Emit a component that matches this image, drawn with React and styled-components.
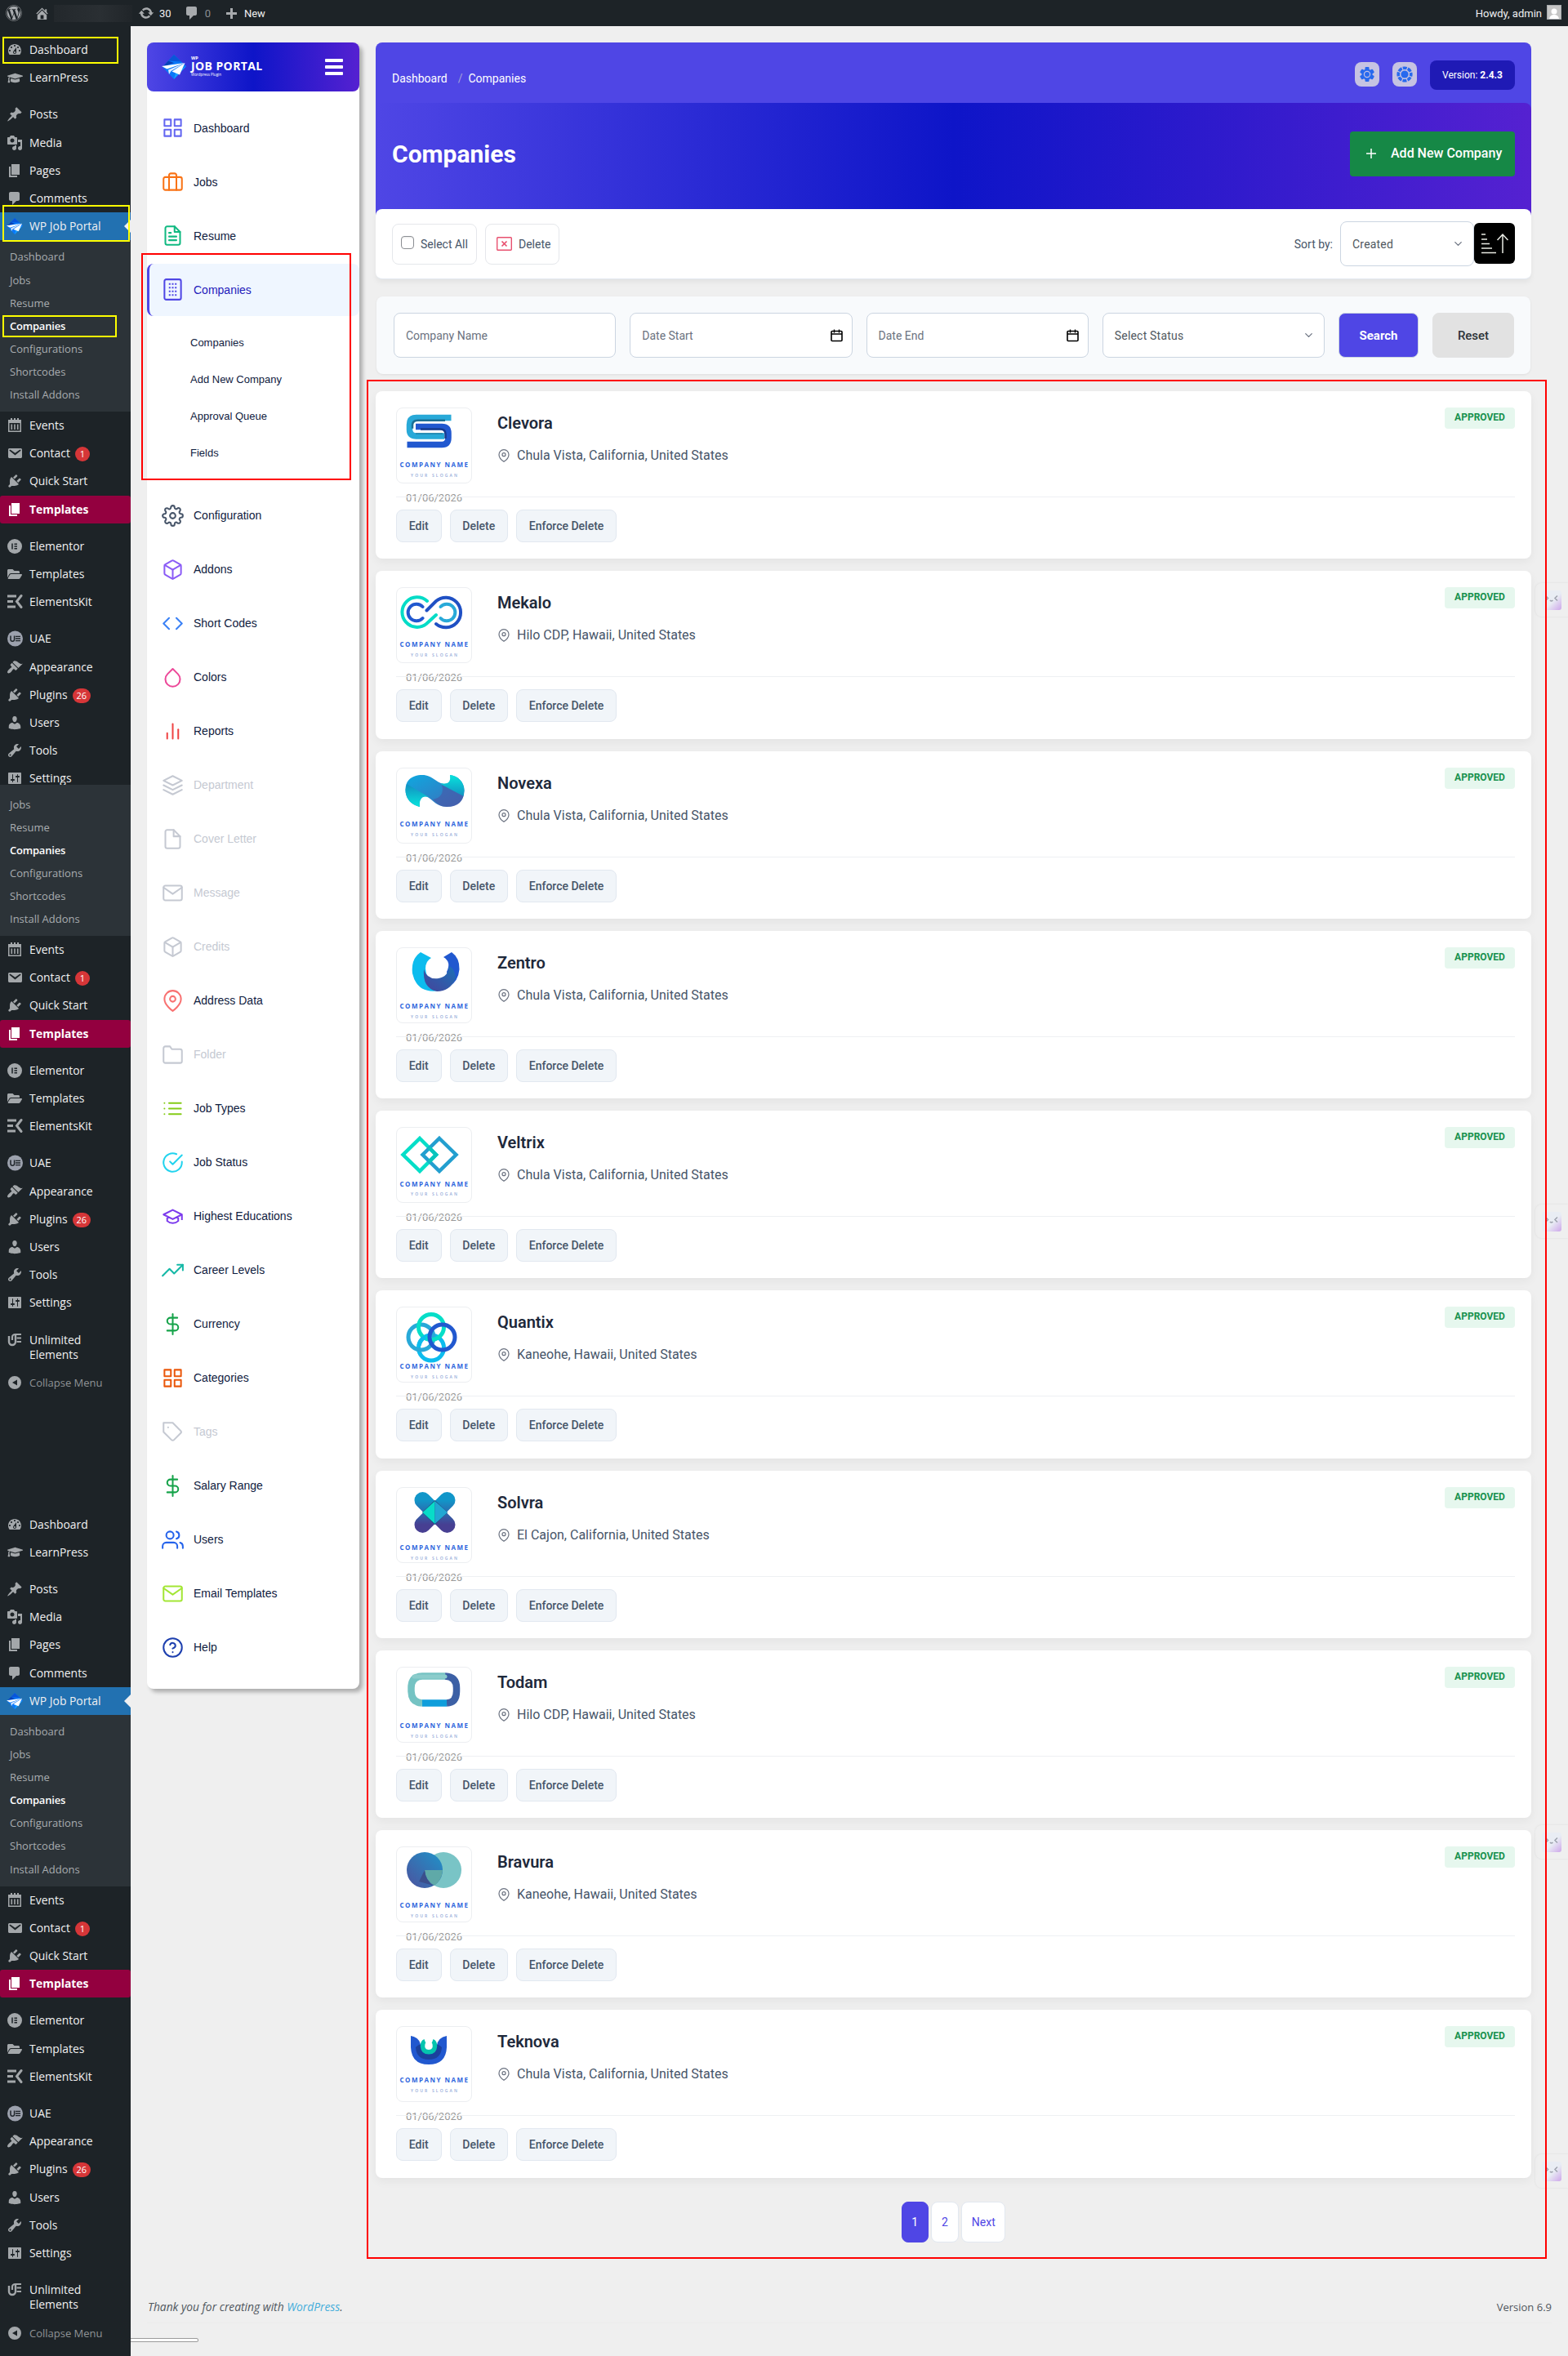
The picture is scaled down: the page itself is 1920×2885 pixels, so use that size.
import React from 'react';
import styled, { createGlobalStyle, css } from 'styled-components';
import {
  FiGrid,
  FiBriefcase,
  FiFileText,
  FiSettings,
  FiBox,
  FiCode,
  FiDroplet,
  FiBarChart2,
  FiLayers,
  FiFile,
  FiMail,
  FiMapPin,
  FiFolder,
  FiList,
  FiCheckCircle,
  FiTrendingUp,
  FiDollarSign,
  FiTag,
  FiUsers,
  FiHelpCircle,
  FiChevronDown,
} from 'react-icons/fi';
import { FaWordpress, FaGraduationCap, FaFolderOpen } from 'react-icons/fa';

const dashicons = {
  home: 'M16 8.5l1.53 1.53-1.06 1.06L10 4.6l-6.47 6.49-1.06-1.06L10 2.5l4 4v-2h2v4zm-6-2.46l6 5.99V18H4v-5.97zM12 17v-5H8v5h4z',
  update:
    'M10.2 3.28c3.53 0 6.43 2.61 6.92 6h2.08l-3.5 4-3.5-4h2.32c-.45-1.97-2.21-3.45-4.32-3.45-1.45 0-2.73.71-3.54 1.78L4.95 5.66C6.23 4.2 8.11 3.28 10.2 3.28zm-.4 13.44c-3.52 0-6.43-2.61-6.92-6H.8l3.5-4c1.17 1.33 2.33 2.67 3.5 4H5.48c.45 1.97 2.21 3.45 4.32 3.45 1.45 0 2.73-.71 3.54-1.78l1.71 1.95c-1.28 1.46-3.15 2.38-5.25 2.38z',
  plus: 'M17 9v3h-5v5H9v-5H4V9h5V4h3v5h5z',
  dashboard:
    'M3.76 16h12.48c1.1-1.37 1.76-3.11 1.76-5 0-4.42-3.58-8-8-8s-8 3.58-8 8c0 1.89.66 3.63 1.76 5zM10 4c.55 0 1 .45 1 1s-.45 1-1 1-1-.45-1-1 .45-1 1-1zM6 6c.55 0 1 .45 1 1s-.45 1-1 1-1-.45-1-1 .45-1 1-1zm8 0c.55 0 1 .45 1 1s-.45 1-1 1-1-.45-1-1 .45-1 1-1zm-5.37 5.55L12 7v6c0 1.1-.9 2-2 2s-2-.9-2-2c0-.57.24-1.08.63-1.45zM4 10c.55 0 1 .45 1 1s-.45 1-1 1-1-.45-1-1 .45-1 1-1zm12 0c.55 0 1 .45 1 1s-.45 1-1 1-1-.45-1-1 .45-1 1-1zm-5 3c0-.55-.45-1-1-1s-1 .45-1 1 .45 1 1 1 1-.45 1-1z',
  post: 'M10.44 3.02l1.82-1.82 6.36 6.35-1.83 1.82c-1.05-.68-2.48-.57-3.41.36l-.75.75c-.92.93-1.04 2.35-.35 3.41l-1.83 1.82-2.41-2.41-2.8 2.79c-.42.42-3.38 2.71-3.8 2.29s1.86-3.39 2.28-3.81l2.79-2.79L4.1 9.36l1.83-1.82c1.05.69 2.48.57 3.4-.36l.75-.75c.93-.92 1.05-2.35.36-3.41z',
  media:
    'M13 11V4c0-.55-.45-1-1-1h-1.67L9 1H5L3.67 3H2c-.55 0-1 .45-1 1v7c0 .55.45 1 1 1h10c.55 0 1-.45 1-1zM7 4.5c1.38 0 2.5 1.12 2.5 2.5S8.38 9.5 7 9.5 4.5 8.38 4.5 7 5.62 4.5 7 4.5zM14 6h5v10.5c0 1.38-1.12 2.5-2.5 2.5S14 17.88 14 16.5s1.12-2.5 2.5-2.5c.17 0 .34.02.5.05V9h-3V6zm-4 8.05V13h2v3.5c0 1.38-1.12 2.5-2.5 2.5S7 17.88 7 16.5 8.12 14 9.5 14c.17 0 .34.02.5.05z',
  page: 'M6 15V2h10v13H6zm-1 1h8v2H3V5h2v11z',
  comment:
    'M5 2h9c1.1 0 2 .9 2 2v7c0 1.1-.9 2-2 2h-2l-5 5v-5H5c-1.1 0-2-.9-2-2V4c0-1.1.9-2 2-2z',
  calendar:
    'M5 1h2v2h2V1h2v2h2V1h2v2h3v15H2V3h3zM3.500 7v9.500h13V7zM5.500 8.500h1.600v6.500h-1.600zM9.200 8.500h1.600v6.500h-1.600zM12.900 8.500h1.600v6.500h-1.600z',
  email:
    'M3.87 4h13.25C18.37 4 19 4.59 19 5.79v8.42c0 1.19-.63 1.79-1.88 1.79H3.87c-1.25 0-1.88-.6-1.88-1.79V5.79c0-1.2.63-1.79 1.88-1.79zm6.62 8.6l6.74-5.53c.24-.2.43-.66.13-1.07-.29-.41-.82-.42-1.17-.17l-5.7 3.86L4.8 5.83c-.35-.25-.88-.24-1.17.17-.3.41-.11.87.13 1.07z',
  plugin:
    'M13.11 4.36L9.87 7.6 8 5.73l3.24-3.24c.35-.34 1.05-.2 1.56.32.52.51.66 1.21.31 1.55zm-8 1.77l.91-1.12 9.01 9.01-1.19.84c-.71.71-2.63 1.16-3.82 1.16H6.14L4.9 17.26c-.59.59-1.54.59-2.12 0-.59-.58-.59-1.53 0-2.12l1.24-1.24v-3.88c0-1.13.4-3.19 1.09-3.89zm7.26 3.97l3.24-3.24c.34-.35 1.04-.21 1.55.31.52.51.66 1.21.31 1.55l-3.24 3.25z',
  appearance:
    'M14.48 11.06L7.41 3.99l1.5-1.5c.5-.56 2.3-.47 3.51.32 1.21.8 1.43 1.28 2.91 2.1 1.18.64 2.45 1.26 4.45.85zm-.71.71L6.7 4.7 4.93 6.47c-.39.39-.39 1.02 0 1.41l1.06 1.06c.39.39.39 1.03 0 1.42-.6.6-1.43 1.11-2.21 1.69-.35.26-.7.53-1.01.84C1.43 14.23.4 16.08 1.4 17.07c.99 1 2.84-.03 4.18-1.36.31-.31.58-.66.85-1.02.57-.78 1.08-1.61 1.69-2.21.39-.39 1.02-.39 1.41 0l1.06 1.06c.39.39 1.02.39 1.41 0z',
  users:
    'M10 9.25c-2.27 0-2.73-3.44-2.73-3.44C7 4.02 7.82 2 9.97 2c2.16 0 2.98 2.02 2.71 3.81 0 0-.41 3.44-2.68 3.44zm0 2.57L12.72 10c2.39 0 4.52 2.33 4.52 4.53v2.49s-3.65 1.13-7.24 1.13c-3.65 0-7.24-1.13-7.24-1.13v-2.49c0-2.25 1.94-4.48 4.47-4.48z',
  tools:
    'M16.68 9.77c-1.34 1.34-3.3 1.67-4.95.99l-5.41 6.52c-.99.99-2.59.99-3.58 0s-.99-2.59 0-3.57l6.52-5.42c-.68-1.65-.35-3.61.99-4.95 1.28-1.28 3.12-1.62 4.72-1.06l-2.89 2.89 2.82 2.82 2.86-2.87c.53 1.58.18 3.39-1.08 4.65zM3.81 16.21c.4.39 1.04.39 1.43 0 .4-.4.4-1.04 0-1.43-.39-.4-1.03-.4-1.43 0-.39.39-.39 1.03 0 1.43z',
  settings:
    'M18 16V4c0-.55-.45-1-1-1H3c-.55 0-1 .45-1 1v12c0 .55.45 1 1 1h14c.55 0 1-.45 1-1zM8 11h1c.55 0 1 .45 1 1s-.45 1-1 1H8v1.5c0 .28-.22.5-.5.5s-.5-.22-.5-.5V13H6c-.55 0-1-.45-1-1s.45-1 1-1h1V5.500c0-.28.22-.5.5-.5s.5.22.5.5V11zm5-2h-1c-.55 0-1-.45-1-1s.45-1 1-1h1V5.500c0-.28.22-.5.5-.5s.5.22.5.5V7h1c.55 0 1 .45 1 1s-.45 1-1 1h-1v5.500c0 .28-.22.5-.5.5s-.5-.22-.5-.5V9z',
  collapse: 'M10 2a8 8 0 1 0 0 16 8 8 0 0 0 0-16zm3 4.500v7l-6-3.500z',
};

function Dashicon({ name, size = 20 }) {
  return (
    <svg width={size} height={size} viewBox="0 0 20 20" fill="currentColor" fillRule="evenodd">
      <path d={dashicons[name]} />
    </svg>
  );
}

function PlaneLogo({ size }) {
  return (
    <svg width={size} height={size} viewBox="0 0 30 30">
      <path d="M15 0 30 14 15 30 1 15z" fill="#0a78f8" />
      <path d="M15 0 8 7.500 24 8.500z" fill="#0a55d8" />
      <path d="M1 15 8 7.500 15 10z" fill="#0840b8" />
      <path d="M15 30 30 14 17 22z" fill="#14a0ff" />
      <path d="M28.500 10 0 14 6.500 17.500z" fill="#fff" />
      <path d="M28.500 10 8 18.500 9 24 11.500 20z" fill="#dcebff" />
      <path d="M28.500 10 12.500 20.500 22 24.500z" fill="#fff" />
    </svg>
  );
}

function ElementorIcon() {
  return (
    <svg width="20" height="20" viewBox="0 0 20 20">
      <circle cx="10" cy="10" r="9" fill="currentColor" />
      <path d="M7 6.500v7M9.500 7.200H13M9.500 10H13M9.500 12.800H13" stroke="#1d2327" strokeWidth="1.500" />
    </svg>
  );
}

function ElementsKitIcon() {
  return (
    <svg width="20" height="20" viewBox="0 0 20 20" fill="none" stroke="currentColor">
      <path d="M1 3h11M1 9.500h7M1 16h10" strokeWidth="3" />
      <path d="M18 2.500 12.500 9.500 18 16.500" strokeWidth="3" strokeLinecap="round" />
    </svg>
  );
}

function UaeIcon() {
  return (
    <svg width="20" height="20" viewBox="0 0 20 20" fill="none" stroke="#1d2327">
      <circle cx="10.500" cy="10" r="9.500" fill="#9ca1ad" stroke="none" />
      <path d="M5 6.500v4.500a2.300 2.300 0 0 0 4.600 0V6.500" strokeWidth="1.500" />
      <path d="M11 7.300h6M11 10h6M11 12.700h6" strokeWidth="1.300" />
    </svg>
  );
}

function UnlimitedIcon() {
  return (
    <svg width="20" height="20" viewBox="0 0 20 20" fill="none" stroke="currentColor">
      <path d="M3 5v7a4 4 0 0 0 8 0V3" strokeWidth="2.400" />
      <path d="M7 10V6.500Q7 3 11 3h7M12.500 7.500H18M12.500 12H18" strokeWidth="2.200" />
    </svg>
  );
}

const topItems = [
  { label: 'Dashboard', icon: <Dashicon name="dashboard" /> },
  { label: 'LearnPress', icon: <FaGraduationCap size={19} /> },
  'sep',
  { label: 'Posts', icon: <Dashicon name="post" /> },
  { label: 'Media', icon: <Dashicon name="media" /> },
  { label: 'Pages', icon: <Dashicon name="page" /> },
  { label: 'Comments', icon: <Dashicon name="comment" /> },
  { label: 'WP Job Portal', icon: <PlaneLogo size={20} />, variant: 'current' },
];

const subItems = [
  'Dashboard',
  'Jobs',
  'Resume',
  'Companies',
  'Configurations',
  'Shortcodes',
  'Install Addons',
];

const bottomItems = [
  { label: 'Events', icon: <Dashicon name="calendar" /> },
  { label: 'Contact', icon: <Dashicon name="email" />, count: 1 },
  { label: 'Quick Start', icon: <Dashicon name="plugin" /> },
  { label: 'Templates', icon: <Dashicon name="page" />, variant: 'promo' },
  'sep',
  { label: 'Elementor', icon: <ElementorIcon /> },
  { label: 'Templates', icon: <FaFolderOpen size={18} /> },
  { label: 'ElementsKit', icon: <ElementsKitIcon /> },
  'sep',
  { label: 'UAE', icon: <UaeIcon /> },
  { label: 'Appearance', icon: <Dashicon name="appearance" /> },
  { label: 'Plugins', icon: <Dashicon name="plugin" />, count: 26 },
  { label: 'Users', icon: <Dashicon name="users" /> },
  { label: 'Tools', icon: <Dashicon name="tools" /> },
  { label: 'Settings', icon: <Dashicon name="settings" /> },
];

const tailItems = [
  'sep',
  { label: 'Unlimited Elements', icon: <UnlimitedIcon /> },
  { label: 'Collapse Menu', icon: <Dashicon name="collapse" />, variant: 'muted' },
];

function MenuList({ items }) {
  return items.map((item, i) =>
    item === 'sep' ? (
      <MenuSeparator key={i} />
    ) : (
      <MenuItem key={i} $variant={item.variant}>
        <MenuIcon $bright={item.variant === 'promo'}>{item.icon}</MenuIcon>
        <MenuLabel $small={item.variant === 'muted'}>
          {item.label}
          {item.count && <Count>{item.count}</Count>}
        </MenuLabel>
      </MenuItem>
    ),
  );
}

function SubMenu() {
  return (
    <SubMenuList>
      {subItems.map(label => (
        <SubMenuItem key={label} $active={label === 'Companies'}>
          {label}
        </SubMenuItem>
      ))}
    </SubMenuList>
  );
}

function BuildingIcon() {
  return (
    <svg viewBox="0 0 24 24" fill="none" stroke="currentColor">
      <rect x="3" y="1" width="18" height="22" rx="2" />
      {[6, 10, 14, 18].map(y => (
        <path key={y} d={`M7.800 ${y}h1.800M11.100 ${y}h1.800M14.400 ${y}h1.800`} />
      ))}
    </svg>
  );
}

function CapIcon() {
  return (
    <svg viewBox="0 0 24 24" fill="none" stroke="currentColor" strokeLinejoin="round">
      <path d="M22 10v6M2 10l10-5 10 5-10 5zM6 12v5c3 3 9 3 12 0v-5" />
    </svg>
  );
}

const navBefore = [
  { label: 'Dashboard', icon: FiGrid, color: '#6366f1' },
  { label: 'Jobs', icon: FiBriefcase, color: '#f97316' },
  { label: 'Resume', icon: FiFileText, color: '#10b981' },
  { label: 'Companies', icon: BuildingIcon, color: '#4f46e5', active: true },
];

const navChildren = ['Companies', 'Add New Company', 'Approval Queue', 'Fields'];

const navAfter = [
  { label: 'Configuration', icon: FiSettings, color: '#475569' },
  { label: 'Addons', icon: FiBox, color: '#8b5cf6' },
  { label: 'Short Codes', icon: FiCode, color: '#3b82f6' },
  { label: 'Colors', icon: FiDroplet, color: '#ec4899' },
  { label: 'Reports', icon: FiBarChart2, color: '#ef4444' },
  { label: 'Department', icon: FiLayers, disabled: true },
  { label: 'Cover Letter', icon: FiFile, disabled: true },
  { label: 'Message', icon: FiMail, disabled: true },
  { label: 'Credits', icon: FiBox, disabled: true },
  { label: 'Address Data', icon: FiMapPin, color: '#f87171' },
  { label: 'Folder', icon: FiFolder, disabled: true },
  { label: 'Job Types', icon: FiList, color: '#84cc16' },
  { label: 'Job Status', icon: FiCheckCircle, color: '#22d3ee' },
  { label: 'Highest Educations', icon: CapIcon, color: '#7c3aed' },
  { label: 'Career Levels', icon: FiTrendingUp, color: '#14b8a6' },
  { label: 'Currency', icon: FiDollarSign, color: '#16a34a' },
  { label: 'Categories', icon: FiGrid, color: '#ea580c' },
  { label: 'Tags', icon: FiTag, disabled: true },
  { label: 'Salary Range', icon: FiDollarSign, color: '#16a34a' },
  { label: 'Users', icon: FiUsers, color: '#2563eb' },
  { label: 'Email Templates', icon: FiMail, color: '#a3e635' },
  { label: 'Help', icon: FiHelpCircle, color: '#1e40af' },
];

function NavList({ items }) {
  return items.map(({ label, icon: Icon, color, active, disabled }) => (
    <NavItem key={label} $active={active} $disabled={disabled}>
      <NavIcon $color={disabled ? '#c5c9d2' : color}>
        <Icon />
      </NavIcon>
      {label}
    </NavItem>
  ));
}

function ClevoraArt() {
  return (
    <g fill="none">
      <path d="M67.500 12.500H25q-8.500 0-8.500 8.500v6q0 8 8.500 8h34" stroke="#28a9d8" strokeWidth="7.500" />
      <path d="M24 23.500h32q8 0 8 8v5.500q0 8.500-8 8.500H13.500" stroke="#2158cf" strokeWidth="7.500" />
      <path d="M60 15.700H27q-7 0-7 6v4" stroke="#1a6f95" strokeWidth="2.500" />
      <path d="M30 26.500h24q6.500 0 6.500 6V38" stroke="#163b8e" strokeWidth="2.500" />
      <path d="M24 32h33" stroke="#1f82a8" strokeWidth="1.500" />
    </g>
  );
}

function MekaloArt() {
  return (
    <g fill="none" strokeWidth="4" strokeLinecap="round">
      <path d="M38 17A18.300 18.300 0 1 0 37 45L49 34" stroke="#04dcc7" />
      <path d="M49 45A18.300 18.300 0 1 0 49 17L37.500 28.500" stroke="#1f50c4" />
      <path d="M32.500 24A10.300 10.300 0 1 0 32.500 38" stroke="#2158cf" />
      <path d="M54.500 24A10.300 10.300 0 1 1 54.500 38" stroke="#28a9d8" />
    </g>
  );
}

function NovexaArt() {
  return (
    <>
      <defs>
        <linearGradient id="nvA" x1="0" x2="1" y1="0" y2="1">
          <stop offset="0" stopColor="#0ea9e0" />
          <stop offset="1" stopColor="#3f6cb8" />
        </linearGradient>
        <linearGradient id="nvB" x1="0" x2="0" y1="0" y2="1">
          <stop offset="0" stopColor="#08e4dc" />
          <stop offset="1" stopColor="#1292c2" />
        </linearGradient>
        <linearGradient id="nvC" x1="0" x2="0" y1="1" y2="0">
          <stop offset="0" stopColor="#08e4dc" />
          <stop offset="1" stopColor="#128fc0" />
        </linearGradient>
      </defs>
      <path
        d="M11.500 27C11.500 15 20 9 32 9C45 9 50 20 60 20C66 20 68 14 66 9C76 10 83.500 18 83.500 28C83.500 41 75 48 62 48C48 48 42 35 35 35C29 35 28 42 29 48C18 45 11.500 38 11.500 27z"
        fill="url(#nvA)"
      />
      <path d="M13 20L40 36C30 33 28 42 29 48C18 45 11.500 38 11.500 27z" fill="url(#nvC)" />
      <path d="M55 19Q68 22 66 9C76 10 83.500 18 83.500 28L82.500 35L56 21z" fill="url(#nvB)" />
      <path d="M56 21L82.500 35C80 44 73 48 62 48C55 48 50 44 45 39Q60 36 56 21z" fill="#4a55a5" fillOpacity=".6" />
    </>
  );
}

function ZentroArt() {
  return (
    <>
      <defs>
        <linearGradient id="znA" x1="0" x2="1" y1="1" y2="0">
          <stop offset="0" stopColor="#46439a" />
          <stop offset="1" stopColor="#1c72b8" />
        </linearGradient>
      </defs>
      <path d="M30 6L43 13Q36 17 36 26Q38 46 54 53Q26 58 20 32Q18 14 30 6z" fill="#0cbcee" />
      <path d="M68 6Q78 13 77.500 27Q76 42 65 48L62 30Q68 18 58 12z" fill="#2158cf" />
      <path d="M34 27Q38 40 52 38Q64 36 65 23Q72 26 73 38Q66 54 50 54Q32 50 34 27z" fill="url(#znA)" />
    </>
  );
}

function VeltrixArt() {
  return (
    <g fill="none" strokeWidth="4.500">
      <path d="M29 14L49 34L29 54L8.500 34z" stroke="#06dec8" />
      <path d="M53 14L73.500 34L53 54L32.500 34z" stroke="#239fcf" />
      <path d="M40 25L49 34L40 43" stroke="#08c4bd" />
    </g>
  );
}

function QuantixArt() {
  return (
    <g fill="none" strokeWidth="5">
      <circle cx="43" cy="50.500" r="15.500" stroke="#0cbcee" />
      <circle cx="30.500" cy="37.500" r="15.500" stroke="#28a9d8" />
      <circle cx="43" cy="25" r="15.500" stroke="#06dec8" />
      <circle cx="56.500" cy="37.500" r="15.500" stroke="#2158cf" />
      <path d="M28 47.500a15.500 15.500 0 0 1 8-10.500" stroke="#0cbcee" />
    </g>
  );
}

function SolvraArt() {
  return (
    <>
      <defs>
        <linearGradient id="svA" x1="0" x2="0" y1="0" y2="1">
          <stop offset="0" stopColor="#1196c9" />
          <stop offset="1" stopColor="#473f92" />
        </linearGradient>
      </defs>
      <g stroke="url(#svA)" strokeWidth="20" strokeLinecap="round">
        <path d="M32.500 16L62.500 46" />
        <path d="M62.500 16L32.500 46" />
      </g>
      <path d="M47.500 16L63 31L47.500 46L32 31z" fill="#1b4c78" />
      <path d="M47.500 17V45L32.500 31z" fill="#08dcc8" />
      <path d="M47.500 17V45L63 31z" fill="#22a7d3" />
    </>
  );
}

function TodamArt() {
  return (
    <g fill="none" strokeWidth="8.500">
      <path d="M60 11.500H32Q18.500 12 18.500 26V30Q19 44 32 44.500" stroke="#75c3c3" />
      <path d="M60 11.500Q74 12 74 26V30Q74 44 62 44.500" stroke="#3c60a5" />
      <path d="M32 44.500H62" stroke="#0f9edb" />
      <path d="M22 12H60" stroke="#8bcccb" strokeWidth="5" strokeLinecap="round" />
    </g>
  );
}

function BravuraArt() {
  return (
    <>
      <defs>
        <linearGradient id="bvA" x1="1" x2="0" y1="0" y2="1">
          <stop offset="0" stopColor="#1f93c9" />
          <stop offset="1" stopColor="#4c529e" />
        </linearGradient>
      </defs>
      <circle cx="58" cy="29" r="22" fill="#79c4c6" />
      <circle cx="35" cy="29" r="22" fill="url(#bvA)" />
      <path d="M35 29H57Q56 41 47 48Q36 42 35 29z" fill="#5fa9a8" />
      <path d="M35 29Q36 42 46 48L28 43z" fill="#3b4f8c" />
    </>
  );
}

function TeknovaArt() {
  return (
    <>
      <path d="M18 12Q29 14 30 24H50Q51 14 62 12V26Q61 47 40 47Q19 47 18 26z" fill="#2158cf" />
      <path d="M24 26Q30 20 31 24H49Q50 20 56 26Q55 41 40 41Q25 41 24 26z" fill="#1b419d" />
      <path d="M34.500 16Q29.500 18 29.800 25Q30.500 34.500 40 34.500Q49.500 34.500 50.200 25Q50.500 18 45.500 16L44 20H36z" fill="#05c4ae" />
      <path d="M36 15.500H44Q42 18 44.500 22Q46 29 40 29Q34 29 35.500 22Q38 18 36 15.500z" fill="#fff" />
    </>
  );
}

const companies = [
  { name: 'Clevora', place: 'Chula Vista, California, United States', art: ClevoraArt, y: 73 },
  { name: 'Mekalo', place: 'Hilo CDP, Hawaii, United States', art: MekaloArt, y: 73 },
  { name: 'Novexa', place: 'Chula Vista, California, United States', art: NovexaArt, y: 72 },
  { name: 'Zentro', place: 'Chula Vista, California, United States', art: ZentroArt, y: 75 },
  { name: 'Veltrix', place: 'Chula Vista, California, United States', art: VeltrixArt, y: 72.5 },
  { name: 'Quantix', place: 'Kaneohe, Hawaii, United States', art: QuantixArt, y: 76 },
  { name: 'Solvra', place: 'El Cajon, California, United States', art: SolvraArt, y: 77 },
  { name: 'Todam', place: 'Hilo CDP, Hawaii, United States', art: TodamArt, y: 75 },
  { name: 'Bravura', place: 'Kaneohe, Hawaii, United States', art: BravuraArt, y: 75 },
  { name: 'Teknova', place: 'Chula Vista, California, United States', art: TeknovaArt, y: 69 },
];

function CompanyCard({ company }) {
  const Art = company.art;
  return (
    <Card>
      <CardTop>
        <LogoColumn>
          <LogoBox>
            <svg width="91" height="91" viewBox="1 1 91 91">
              <Art />
              <LogoText x="4.500" y={company.y} textLength="83.500">
                COMPANY NAME
              </LogoText>
              <SloganText x="18" y={company.y + 11.5} textLength="57">
                YOUR SLOGAN
              </SloganText>
            </svg>
          </LogoBox>
          <Created>01/06/2026</Created>
        </LogoColumn>
        <Info>
          <CompanyName>{company.name}</CompanyName>
          <Place>
            <FiMapPin size={16} />
            {company.place}
          </Place>
        </Info>
        <Status>APPROVED</Status>
      </CardTop>
      <Actions>
        <ActionButton>Edit</ActionButton>
        <ActionButton>Delete</ActionButton>
        <ActionButton>Enforce Delete</ActionButton>
      </Actions>
    </Card>
  );
}

function CalendarIcon() {
  return (
    <svg width="15" height="16" viewBox="0 0 15 16" fill="none" stroke="#000">
      <rect x="1" y="2.500" width="13" height="12" rx="1" strokeWidth="1.600" />
      <path d="M1 6h13" strokeWidth="1.500" />
      <path d="M4.500 .5v4M10.500 .5v4" strokeWidth="1.400" />
    </svg>
  );
}

function GearBadge() {
  return (
    <svg width="20" height="20" viewBox="0 0 20 20" fill="#2769ee">
      {[0, 60, 120].map(a => (
        <rect key={a} x="7.500" y="1" width="5" height="18" rx="1" transform={`rotate(${a} 10 10)`} />
      ))}
      <circle cx="10" cy="10" r="6.600" />
      <circle cx="10" cy="10" r="3.600" fill="none" stroke="#c3c1e4" strokeWidth="1.200" />
    </svg>
  );
}

function LifeRingBadge() {
  return (
    <svg width="20" height="20" viewBox="0 0 20 20">
      <circle
        cx="10"
        cy="10"
        r="7.800"
        fill="none"
        stroke="#2769ee"
        strokeWidth="3.600"
        strokeDasharray="4.900 1.226"
        strokeDashoffset="2.450"
      />
      <circle cx="10" cy="10" r="4.600" fill="#2769ee" />
    </svg>
  );
}

function Assistant({ top }) {
  return (
    <AssistantTab $top={top}>
      <AssistantFace>
        <svg width="18" height="10" viewBox="0 0 18 10" fill="none" stroke="#9da1ad" strokeWidth="1.500">
          <path d="M1.500 1.500 4.500 4.500 1.500 7.500M16 1.500 13 4.500 16 7.500M7 7q1.700 2 3.400 0" />
        </svg>
      </AssistantFace>
    </AssistantTab>
  );
}

function App() {
  return (
    <Page>
      <GlobalStyle />
      <AdminBar>
        <BarLeft>
          <FaWordpress size={20} />
          <Dashicon name="home" size={19} />
          <SiteName />
          <BarItem>
            <Dashicon name="update" />
            <span>30</span>
          </BarItem>
          <BarItem $dim>
            <Dashicon name="comment" size={20} />
            <span>0</span>
          </BarItem>
          <BarItem>
            <Dashicon name="plus" />
            <span>New</span>
          </BarItem>
        </BarLeft>
        <BarRight>
          Howdy, admin
          <svg width="18" height="18" viewBox="0 0 18 18">
            <rect width="18" height="18" fill="#a7aaad" />
            <rect x="1" y="1" width="16" height="16" fill="#c5c5c5" />
            <circle cx="9" cy="8" r="3.500" fill="#fff" />
            <path d="M3 17q1-5 6-5t6 5z" fill="#fff" />
          </svg>
        </BarRight>
      </AdminBar>
      <Body>
        <AdminMenu>
          <MenuBlock $height={929} $pad={12}>
            <MenuList items={topItems} />
            <SubMenu />
            <MenuList items={bottomItems} />
          </MenuBlock>
          <MenuBlock $height={877} $shift={-24.6}>
            <SubMenu />
            <MenuList items={bottomItems} />
            <MenuList items={tailItems} />
          </MenuBlock>
          <MenuBlock $height={1047} $pad={11.6}>
            <MenuList items={topItems} />
            <SubMenu />
            <MenuList items={bottomItems} />
            <MenuList items={tailItems} />
          </MenuBlock>
        </AdminMenu>
        <Content>
          <Columns>
            <Nav>
              <NavHeader>
                <Brand>
                  <PlaneLogo size={30} />
                  <BrandText>
                    <small>WP</small>
                    <strong>JOB PORTAL</strong>
                    <em>Wordpress Plugin</em>
                  </BrandText>
                </Brand>
                <Burger>
                  <i />
                  <i />
                  <i />
                </Burger>
              </NavHeader>
              <NavBody>
                <NavList items={navBefore} />
                <NavSub>
                  {navChildren.map(label => (
                    <li key={label}>{label}</li>
                  ))}
                </NavSub>
                <NavList items={navAfter} />
              </NavBody>
            </Nav>
            <Main>
              <TopStrip>
                <Crumbs>
                  Dashboard<span>/</span>Companies
                </Crumbs>
                <StripTools>
                  <StripButton>
                    <GearBadge />
                  </StripButton>
                  <StripButton>
                    <LifeRingBadge />
                  </StripButton>
                  <Version>
                    Version: <b>2.4.3</b>
                  </Version>
                </StripTools>
              </TopStrip>
              <Hero>
                <h1>Companies</h1>
                <AddButton>
                  <svg width="12" height="12" viewBox="0 0 12 12" stroke="#fff" strokeWidth="1.500">
                    <path d="M6 0v12M0 6h12" />
                  </svg>
                  Add New Company
                </AddButton>
              </Hero>
              <Toolbar>
                <ToolButton $width={104} $pad={10}>
                  <Checkbox />
                  Select All
                </ToolButton>
                <ToolButton $width={91} $pad={13}>
                  <svg width="19" height="17" viewBox="0 0 19 17" fill="none" stroke="#e8506f">
                    <rect x=".7" y=".7" width="17.600" height="15.600" rx="1" strokeWidth="1.400" />
                    <path d="M6.500 5.500l6 6M12.500 5.500l-6 6" strokeWidth="1.700" />
                  </svg>
                  Delete
                </ToolButton>
                <SortLabel>Sort by:</SortLabel>
                <Field $width={164}>
                  <SelectText>Created</SelectText>
                  <FiChevronDown size={15} />
                </Field>
                <SortButton>
                  <svg width="34" height="26" viewBox="0 0 34 26" fill="none" stroke="#e9ebe4">
                    <path d="M1 2h5M1 8h7M1 13.500h10M1 19h13M1 24.500h18" strokeWidth="1.500" />
                    <path d="M27 25V2M20.500 9 27 2l6.500 7" strokeWidth="1.500" />
                  </svg>
                </SortButton>
              </Toolbar>
              <Filters>
                <Field>Company Name</Field>
                <Field>
                  Date Start
                  <CalendarIcon />
                </Field>
                <Field>
                  Date End
                  <CalendarIcon />
                </Field>
                <Field>
                  <SelectText>Select Status</SelectText>
                  <FiChevronDown size={15} />
                </Field>
                <FormButton $primary>Search</FormButton>
                <FormButton>Reset</FormButton>
              </Filters>
              <CardList>
                {companies.map(company => (
                  <CompanyCard key={company.name} company={company} />
                ))}
              </CardList>
              <Pagination>
                <PageLink $active>1</PageLink>
                <PageLink>2</PageLink>
                <PageLink>Next</PageLink>
              </Pagination>
            </Main>
          </Columns>
          <Footer>
            <em>
              Thank you for creating with <a>WordPress</a>.
            </em>
            <span>Version 6.9</span>
          </Footer>
          <LoadBar />
        </Content>
      </Body>
      <Assistant top={714} />
      <Assistant top={1475} />
      <Assistant top={2235} />
      <Assistant top={2638} />
      <Outline $color="#ffff00" $x={3} $y={45} $w={142} $h={33} />
      <Outline $color="#ffff00" $x={3} $y={251} $w={156} $h={45} />
      <Outline $color="#ffff00" $x={3} $y={386} $w={140} $h={27} />
      <Outline $color="#ff0000" $x={173} $y={310} $w={257} $h={278} />
      <Outline $color="#ff0000" $x={449} $y={465} $w={1445} $h={2301} />
    </Page>
  );
}

const GlobalStyle = createGlobalStyle`
  * {
    box-sizing: border-box;
  }
  body {
    margin: 0;
    background: #efefef;
    font-family: Roboto, sans-serif;
    font-size: 14px;
  }
  svg {
    display: block;
    flex-shrink: 0;
  }
`;

const gradient = 'linear-gradient(90deg, #4f46e5 0%, #0e15c8 50%, #5521d1 100%)';

const Page = styled.div`
  position: relative;
  width: 1920px;
  height: 2885px;
  overflow: hidden;
`;

/* wordpress chrome */
const AdminBar = styled.header`
  display: flex;
  justify-content: space-between;
  align-items: center;
  height: 32px;
  padding: 0 8px 0 7px;
  background: #1d2327;
  color: #f0f0f1;
  font-size: 13px;
`;

const BarLeft = styled.div`
  display: flex;
  align-items: center;
  color: #a7aaad;
  > svg + svg {
    margin: 1px 0 0 15px;
  }
`;

const SiteName = styled.div`
  width: 96px;
  height: 21px;
  margin: 0 7px 0 5px;
  background: linear-gradient(90deg, #23282c, #2a2f33 60%, #202529);
`;

const BarItem = styled.div`
  display: flex;
  align-items: center;
  margin-right: 15px;
  gap: 6px;
  span {
    color: ${p => (p.$dim ? '#8b8f92' : '#f0f0f1')};
  }
`;

const BarRight = styled.div`
  display: flex;
  align-items: center;
  gap: 6px;
  svg {
    margin-top: -2px;
  }
`;

const Body = styled.div`
  display: flex;
  height: 2853px;
`;

const AdminMenu = styled.nav`
  width: 160px;
  flex-shrink: 0;
  background: #1d2327;
  font-family: 'Open Sans', sans-serif;
`;

const MenuBlock = styled.section`
  height: ${p => p.$height}px;
  padding-top: ${p => p.$pad || 0}px;
  overflow: hidden;
  > :first-child {
    margin-top: ${p => p.$shift || 0}px;
  }
`;

const MenuSeparator = styled.div`
  height: 11px;
`;

const MenuItem = styled.div`
  position: relative;
  display: flex;
  min-height: 34.2px;
  color: #f0f0f1;
  ${p =>
    p.$variant === 'current' &&
    css`
      background: #2271b1;
      &::after {
        content: '';
        position: absolute;
        right: 0;
        top: 9px;
        border: 8px solid transparent;
        border-right-color: #f0f0f1;
        border-left: 0;
      }
    `}
  ${p =>
    p.$variant === 'promo' &&
    css`
      background: #93003f;
      border-radius: 3px;
      color: #fff;
      font-weight: 700;
    `}
  ${p => p.$variant === 'muted' && 'color: #8f9396;'}
`;

const MenuIcon = styled.div`
  display: flex;
  justify-content: center;
  align-items: center;
  width: 36px;
  height: 34px;
  flex-shrink: 0;
  color: ${p => (p.$bright ? '#fff' : '#a3a7aa')};
`;

const MenuLabel = styled.div`
  padding: 8px 0;
  max-width: 110px;
  font-size: ${p => (p.$small ? 13 : 13.9)}px;
  line-height: 18.2px;
`;

const Count = styled.span`
  display: inline-block;
  min-width: 18px;
  height: 18px;
  margin: 0 0 -1px 6px;
  padding: 0 5px;
  border-radius: 9px;
  background: #d63638;
  color: #fff;
  font-size: 11px;
  line-height: 17px;
  text-align: center;
`;

const SubMenuList = styled.div`
  height: 209.5px;
  padding-top: 6px;
  background: #2c3338;
`;

const SubMenuItem = styled.div`
  height: 28.1px;
  padding-left: 12px;
  font-size: 13px;
  line-height: 28px;
  color: ${p => (p.$active ? '#fff' : '#a9adb0')};
  font-weight: ${p => (p.$active ? 600 : 400)};
  letter-spacing: ${p => (p.$active ? '-0.2px' : 'normal')};
`;

/* plugin navigation */
const Content = styled.div`
  position: relative;
  width: 1760px;
  padding: 20px 20px 0;
`;

const Columns = styled.div`
  display: flex;
  align-items: flex-start;
  gap: 20px;
  height: 2763px;
`;

const Nav = styled.aside`
  width: 260px;
  height: 2016px;
  border-radius: 8px;
  background: #fff;
  box-shadow: 4px 4px 5px rgba(0, 0, 0, 0.28);
  font-family: 'Liberation Sans', Arial, sans-serif;
`;

const NavHeader = styled.div`
  display: flex;
  justify-content: space-between;
  align-items: center;
  height: 60px;
  padding: 0 20px 0 18px;
  border-radius: 8px;
  background: ${gradient};
`;

const Brand = styled.div`
  display: flex;
  align-items: center;
  gap: 6px;
`;

const BrandText = styled.div`
  display: flex;
  flex-direction: column;
  margin-top: -1px;
  color: #fff;
  font-family: 'Open Sans', sans-serif;
  white-space: nowrap;
  small {
    font-size: 5.5px;
    font-weight: 700;
    line-height: 5px;
  }
  strong {
    font-size: 14px;
    font-weight: 700;
    line-height: 14px;
    letter-spacing: 0.4px;
  }
  em {
    font-size: 4.5px;
    font-style: normal;
    line-height: 6px;
  }
`;

const Burger = styled.div`
  display: flex;
  flex-direction: column;
  gap: 4.5px;
  i {
    width: 22px;
    height: 3.5px;
    border-radius: 1px;
    background: #fff;
  }
`;

const NavBody = styled.div`
  padding-top: 12.5px;
`;

const NavItem = styled.div`
  display: flex;
  align-items: center;
  height: 64px;
  margin-bottom: 2px;
  padding-left: 14px;
  border-left: 3px solid transparent;
  border-radius: 8px;
  color: #0f2040;
  font-size: 14px;
  line-height: 20px;
  ${p =>
    p.$active &&
    css`
      border-left-color: #4f46e5;
      background: #eff6ff;
      color: #2420bb;
    `}
  ${p => p.$disabled && 'color: #c5c9d2;'}
`;

const NavIcon = styled.span`
  margin: 0 12.5px 0 0.5px;
  color: ${p => p.$color};
  svg {
    width: 27px;
    height: 27px;
    stroke-width: 1.8;
  }
`;

const NavSub = styled.ul`
  height: 210.5px;
  margin: 0;
  padding: 8.5px 0 0 53px;
  list-style: none;
  color: #0f2040;
  font-size: 13px;
  line-height: 45px;
`;

/* main column */
const Main = styled.main`
  width: 1415px;
`;

const TopStrip = styled.div`
  display: flex;
  justify-content: space-between;
  height: 82px;
  margin-bottom: -8px;
  padding: 22px 20px 0;
  border-radius: 8px 8px 0 0;
  background: #4f46e5;
`;

const Crumbs = styled.div`
  color: #fff;
  font-size: 14px;
  line-height: 44px;
  span {
    margin: 0 7px 0 13px;
    color: #a5a3d8;
  }
`;

const StripTools = styled.div`
  display: flex;
  gap: 16px;
  align-items: flex-start;
`;

const StripButton = styled.button`
  display: flex;
  align-items: center;
  justify-content: center;
  width: 30px;
  height: 30px;
  margin: 2px 0 0;
  padding: 0;
  border: 0;
  border-radius: 8px;
  background: #c6c3e2;
`;

const Version = styled.div`
  width: 104px;
  height: 36px;
  border-radius: 8px;
  background: #1f1ab5;
  color: #fff;
  font-size: 12px;
  line-height: 36px;
  text-align: center;
`;

const Hero = styled.div`
  display: flex;
  justify-content: space-between;
  align-items: flex-start;
  height: 138px;
  margin-bottom: -8px;
  padding: 35px 20px 0;
  border-radius: 0 8px 0 0;
  background: ${gradient};
  h1 {
    margin: 0;
    color: #fff;
    font-size: 30px;
    font-weight: 700;
    line-height: 55px;
  }
`;

const AddButton = styled.button`
  display: flex;
  align-items: center;
  gap: 18px;
  width: 202px;
  height: 55px;
  padding: 0 0 2px 20px;
  border: 0;
  border-radius: 4px;
  background: #168846;
  color: #fff;
  font: 500 16px Roboto, sans-serif;
  white-space: nowrap;
`;

const Toolbar = styled.div`
  position: relative;
  display: flex;
  align-items: center;
  height: 86px;
  padding: 0 20px;
  border-radius: 8px;
  border-bottom: 1px solid #e2e8f0;
  background: #fff;
  box-shadow: 0 4px 6px rgba(0, 0, 0, 0.05);
`;

const ToolButton = styled.button`
  display: flex;
  align-items: center;
  gap: 8px;
  width: ${p => p.$width}px;
  height: 50px;
  margin: 0 10px 0 0;
  padding: 0 0 0 ${p => p.$pad}px;
  border: 1px solid #e5e7eb;
  border-radius: 8px;
  background: #fff;
  color: #475569;
  font: 400 14px Roboto, sans-serif;
  white-space: nowrap;
`;

const Checkbox = styled.i`
  width: 16px;
  height: 16px;
  margin-top: -3px;
  border: 1px solid #8c8f94;
  border-radius: 4px;
  box-shadow: inset 0 1px 2px rgba(0, 0, 0, 0.1);
`;

const SortLabel = styled.span`
  margin: 0 9px 0 auto;
  color: #475569;
`;

const Field = styled.div`
  display: flex;
  align-items: center;
  justify-content: space-between;
  ${p => (p.$width ? `width: ${p.$width}px;` : 'flex: 1;')}
  height: 55px;
  padding: 0 11px 0 14px;
  border: 1px solid #cbd5e1;
  border-radius: 8px;
  background: #fff;
  color: #6b7280;
`;

const SelectText = styled.span`
  color: #50575e;
  letter-spacing: 0.2px;
`;

const SortButton = styled.button`
  display: flex;
  align-items: center;
  justify-content: center;
  width: 50px;
  height: 50px;
  margin: -2px 0 0;
  padding: 0;
  border: 0;
  border-radius: 6px;
  background: #000;
`;

const Filters = styled.div`
  display: flex;
  align-items: center;
  gap: 17px;
  height: 95px;
  margin: 21px 1px 21px;
  padding: 0 20px 0 21px;
  border-radius: 8px;
  background: #f8fafc;
  box-shadow: 0 1px 3px rgba(0, 0, 0, 0.07);
`;

const FormButton = styled.button`
  width: ${p => (p.$primary ? 98 : 100)}px;
  height: 55px;
  margin: 0;
  padding: 0;
  border: 1px solid ${p => (p.$primary ? '#cbd5e1' : '#e2e2e2')};
  border-radius: 8px;
  background: ${p => (p.$primary ? '#4f46e5' : '#e2e2e2')};
  color: ${p => (p.$primary ? '#fff' : '#2c3338')};
  font: ${p => (p.$primary ? 700 : 500)} 15px Roboto, sans-serif;
`;

const CardList = styled.div`
  display: flex;
  flex-direction: column;
  gap: 15px;
`;

const Card = styled.article`
  height: 205.25px;
  padding: 20px 20px 0 25px;
  border-radius: 8px;
  background: #fff;
  box-shadow: 0 4px 12px rgba(0, 0, 0, 0.05);
`;

const CardTop = styled.div`
  display: flex;
  align-items: flex-start;
  height: 109px;
`;

const LogoColumn = styled.div`
  width: 93px;
  margin-right: 31px;
`;

const LogoBox = styled.div`
  width: 93px;
  height: 93px;
  border: 1px solid #eceef1;
  border-radius: 8px;
`;

const LogoText = styled.text`
  fill: #2e66dd;
  font: 700 8px 'Open Sans', sans-serif;
`;

const SloganText = styled.text`
  fill: #93a9d8;
  font: 600 5px 'Open Sans', sans-serif;
`;

const Created = styled.div`
  margin-top: 9px;
  color: #999;
  font-size: 13px;
  line-height: 17px;
  text-align: center;
`;

const Info = styled.div`
  flex: 1;
  padding-top: 5px;
`;

const CompanyName = styled.h2`
  margin: 0;
  color: #1e293b;
  font-size: 20px;
  font-weight: 600;
  line-height: 28px;
`;

const Place = styled.div`
  display: flex;
  align-items: center;
  gap: 8px;
  margin-top: 14px;
  color: #475569;
  font-size: 16px;
  line-height: 24px;
  svg {
    color: #6b7280;
    stroke-width: 1.8;
  }
`;

const Status = styled.span`
  width: 86px;
  height: 26px;
  border-radius: 4px;
  background: #e6f7ee;
  color: #17914d;
  font-size: 12px;
  font-weight: 700;
  line-height: 25px;
  text-align: center;
`;

const Actions = styled.div`
  position: relative;
  display: flex;
  gap: 10px;
  padding-top: 15px;
  border-top: 1px solid #eef0f3;
`;

const ActionButton = styled.button`
  height: 40px;
  margin: 0;
  padding: 0 14.8px;
  border: 1px solid #e2e8f0;
  border-radius: 8px;
  background: #f1f5f9;
  color: #475569;
  font: 500 14px Roboto, sans-serif;
`;

const Pagination = styled.div`
  display: flex;
  justify-content: center;
  gap: 3.5px;
  margin-top: 29px;
`;

const PageLink = styled.a`
  height: 50px;
  padding: 0 11.7px;
  border: 1px solid ${p => (p.$active ? '#4f46e5' : '#e2e8f0')};
  border-radius: 8px;
  background: ${p => (p.$active ? '#4f46e5' : '#fff')};
  color: ${p => (p.$active ? '#fff' : '#4f46e5')};
  line-height: 48px;
`;

const Footer = styled.footer`
  display: flex;
  justify-content: space-between;
  height: 30px;
  padding: 0 0 0 1px;
  border-bottom: 1px solid #ebebeb;
  color: #50575e;
  font: 13px/20px 'Open Sans', sans-serif;
  em {
    font-size: 13.8px;
  }
  a {
    color: #45aedb;
  }
`;

const LoadBar = styled.div`
  position: absolute;
  left: 0;
  top: 2831px;
  width: 83px;
  height: 5px;
  border: 1px solid #9b9b9b;
  border-left: 0;
  border-radius: 0 3px 3px 0;
  background: #fff;
`;

const AssistantTab = styled.div`
  position: absolute;
  left: 1880px;
  top: ${p => p.$top}px;
  width: 48px;
  height: 41px;
  padding: 9px 8px;
  border-radius: 8px;
  box-shadow: 0 0 3px rgba(0, 0, 0, 0.08);
`;

const AssistantFace = styled.div`
  width: 24px;
  height: 24px;
  padding: 5px 3px;
  border-radius: 3px;
  background: linear-gradient(135deg, #e9edf4 55%, #cda6ea);
`;

const Outline = styled.div`
  position: absolute;
  left: ${p => p.$x}px;
  top: ${p => p.$y}px;
  width: ${p => p.$w}px;
  height: ${p => p.$h}px;
  border: 2px solid ${p => p.$color};
  pointer-events: none;
`;

export default App;
